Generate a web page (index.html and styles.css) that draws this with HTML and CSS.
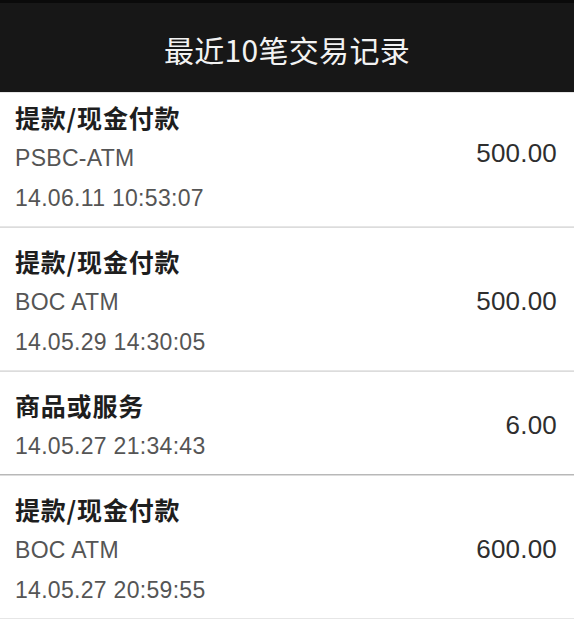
FILE: index.html
```html
<!DOCTYPE html>
<html lang="zh-CN">
<head>
<meta charset="utf-8">
<title>最近10笔交易记录</title>
<link rel="stylesheet" href="styles.css">
</head>
<body>
<div class="page">
  <header class="header">
    <h1 class="title">最近10笔交易记录</h1>
  </header>
  <ul class="list">
    <li class="row first">
      <div class="info">
        <div class="type">提款/现金付款</div>
        <div class="sub">PSBC-ATM</div>
        <div class="sub">14.06.11 10:53:07</div>
      </div>
      <div class="amount">500.00</div>
    </li>
    <li class="row">
      <div class="info">
        <div class="type">提款/现金付款</div>
        <div class="sub">BOC ATM</div>
        <div class="sub">14.05.29 14:30:05</div>
      </div>
      <div class="amount">500.00</div>
    </li>
    <li class="row">
      <div class="info">
        <div class="type">商品或服务</div>
        <div class="sub">14.05.27 21:34:43</div>
      </div>
      <div class="amount">6.00</div>
    </li>
    <li class="row last">
      <div class="info">
        <div class="type">提款/现金付款</div>
        <div class="sub">BOC ATM</div>
        <div class="sub">14.05.27 20:59:55</div>
      </div>
      <div class="amount">600.00</div>
    </li>
  </ul>
</div>
</body>
</html>
```

FILE: styles.css
```css
html, body {
  margin: 0;
  padding: 0;
  background: #ffffff;
}

body {
  font-family: "Liberation Sans", "Noto Sans CJK SC", sans-serif;
}

.page {
  width: 574px;
  height: 627px;
  overflow: hidden;
  background: #ffffff;
}

.header {
  height: 93px;
  background: #171717;
  border-top: 3px solid #0a0a0a;
  box-sizing: border-box;
  border-bottom: 1px solid #8a8a8a;
  display: flex;
  align-items: center;
  justify-content: center;
}

.title {
  margin: 0;
  padding-top: 3px;
  font-family: "Noto Sans CJK SC", "Liberation Sans", sans-serif;
  font-weight: 400;
  font-size: 30px;
  letter-spacing: 0.3px;
  color: #f2f2f2;
  line-height: 1;
}

.list {
  list-style: none;
  margin: 0;
  padding: 0;
}

.row {
  display: flex;
  justify-content: space-between;
  align-items: center;
  padding: 14px 17px 8px 15px;
  border-bottom: 1px solid #b8b8b8;
  box-shadow: 0 1px 0 #dcdcdc, 0 -1px 0 #e6e6e6;
}

.row.first {
  padding-top: 4px;
}

.row.first .amount {
  margin-bottom: 8px;
}

.row.last {
  border-bottom-color: #e6e6e6;
  box-shadow: none;
}

.info {
  display: flex;
  flex-direction: column;
}

.type {
  font-family: "Noto Sans CJK SC", "Liberation Sans", sans-serif;
  font-weight: 700;
  font-size: 25px;
  letter-spacing: 0.8px;
  line-height: 41px;
  height: 41px;
  color: #1e1e1e;
}

.sub {
  font-size: 23px;
  line-height: 40px;
  height: 40px;
  color: #555555;
  letter-spacing: 0.3px;
}

.amount {
  font-size: 26px;
  color: #2e2e2e;
  letter-spacing: 0.2px;
}
```
